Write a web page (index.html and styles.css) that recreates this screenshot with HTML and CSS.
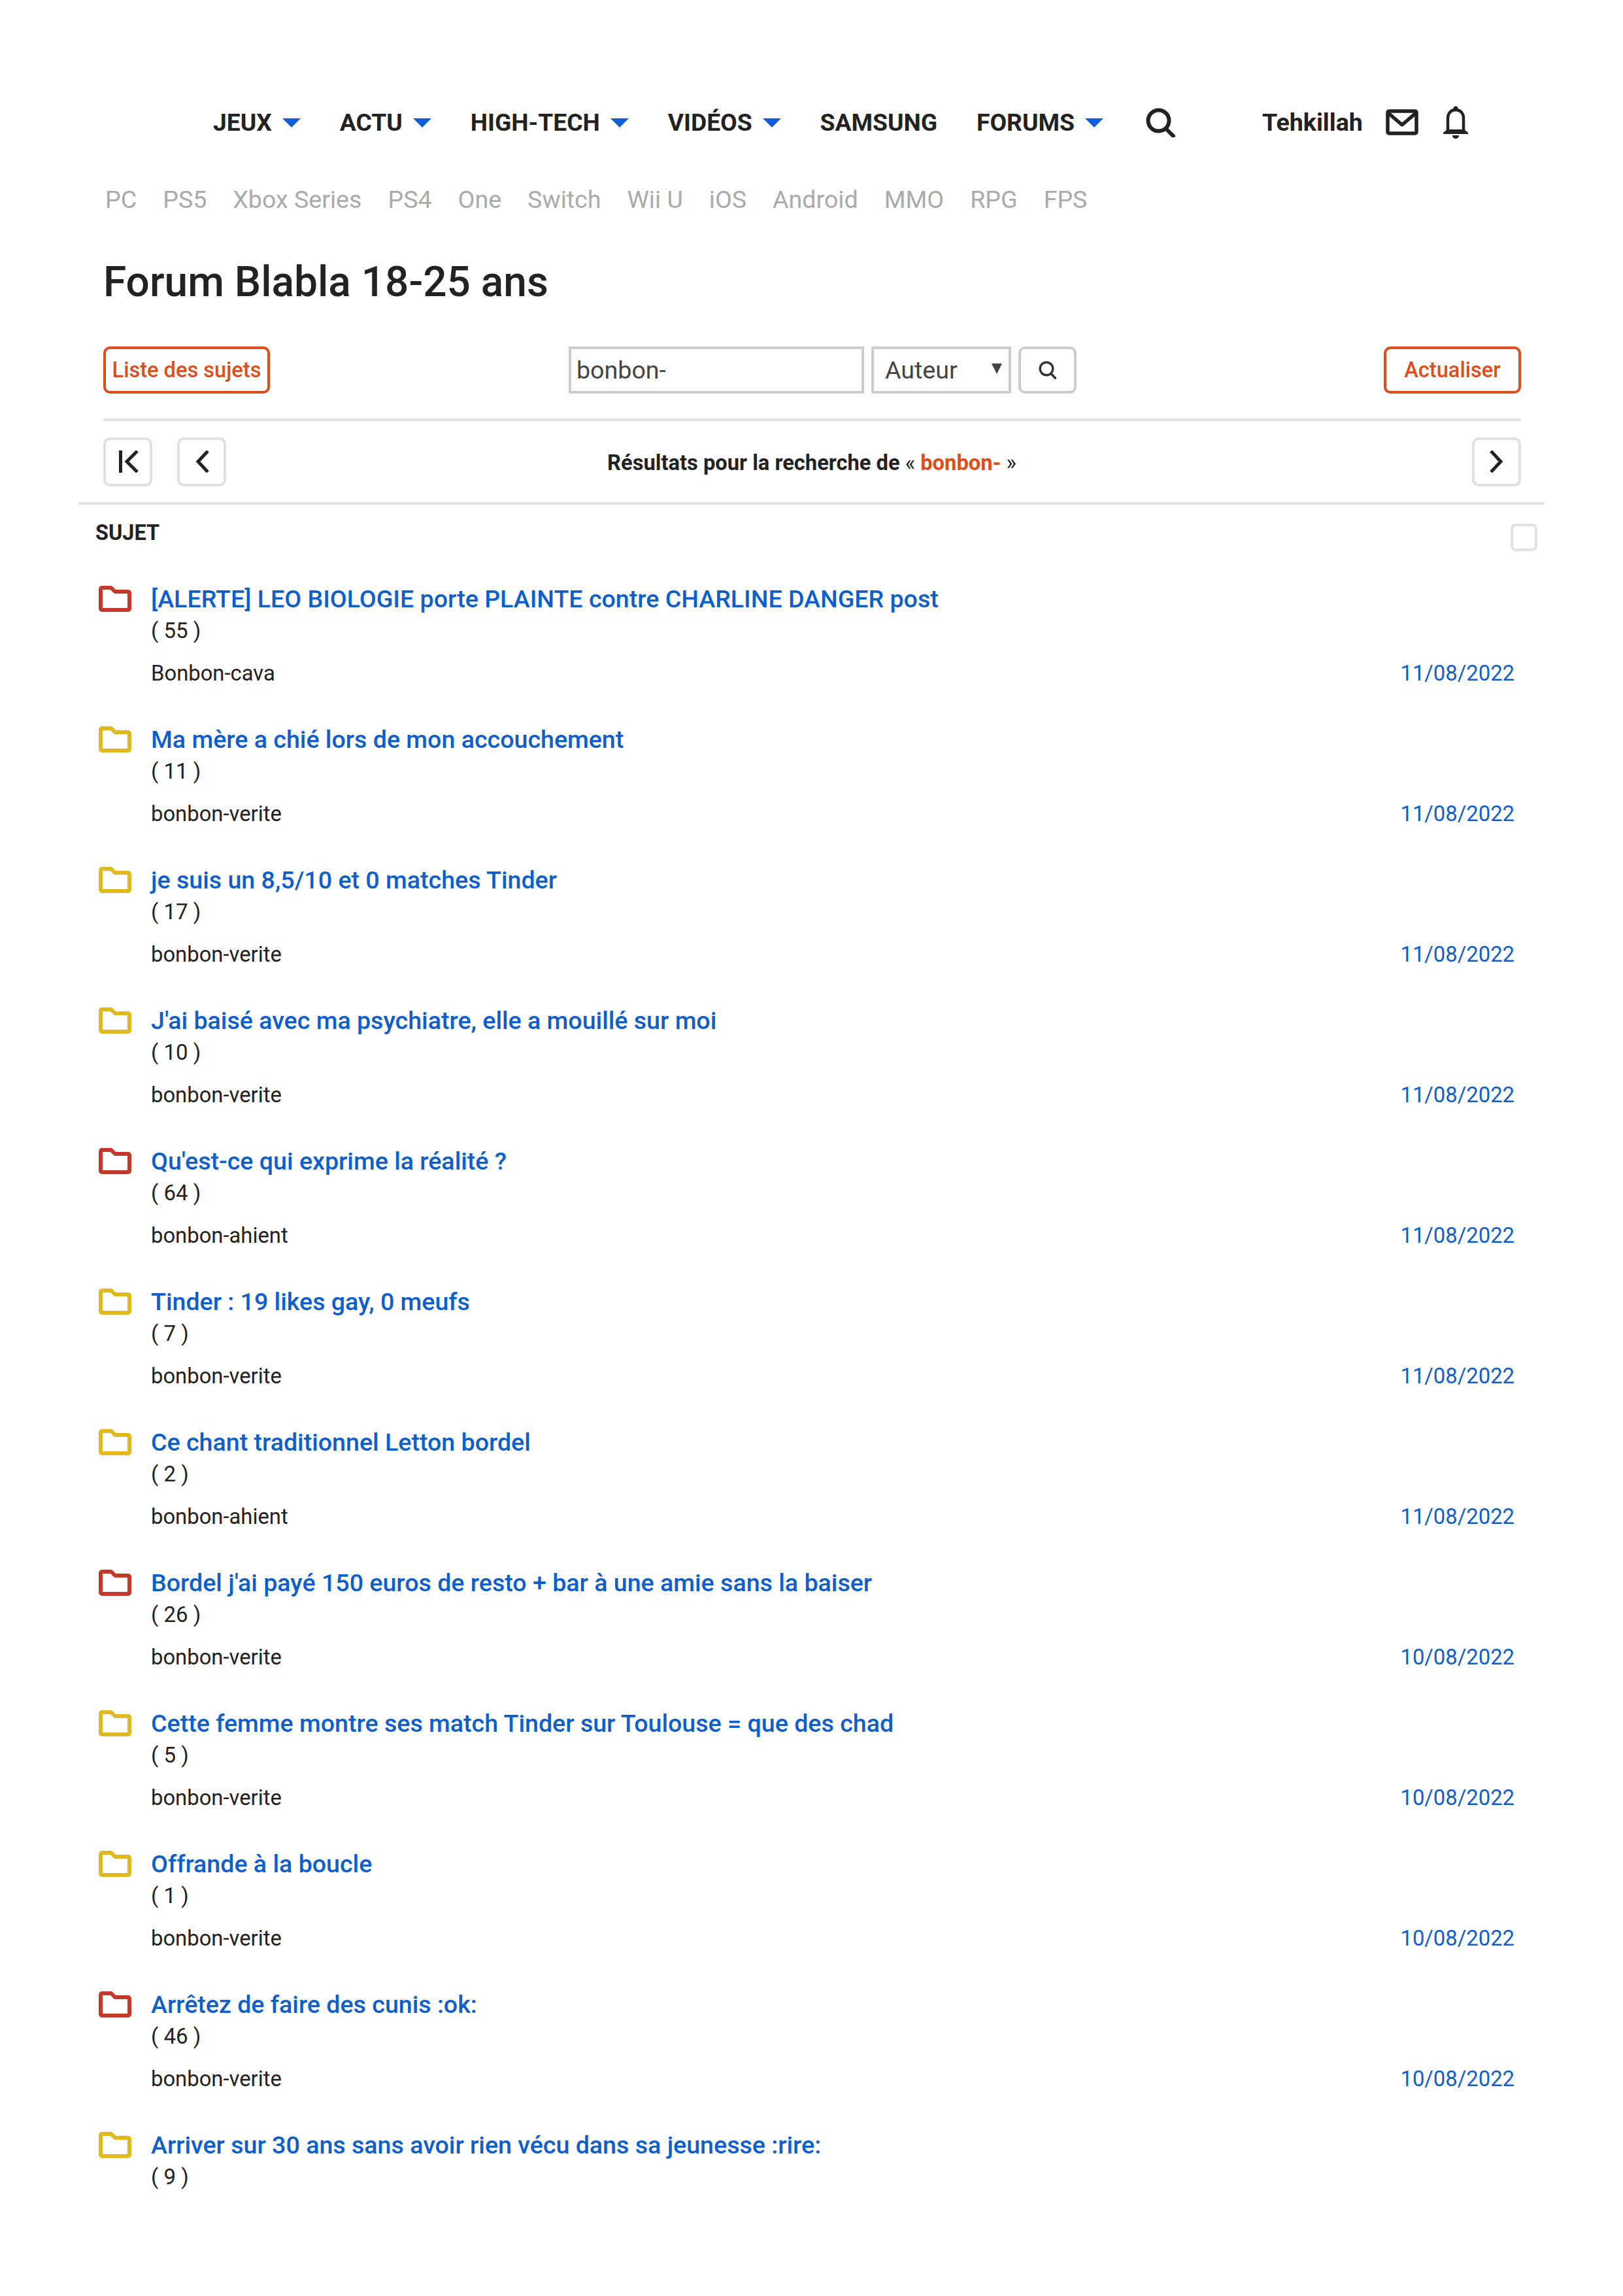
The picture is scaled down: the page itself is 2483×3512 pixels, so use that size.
FILE: index.html
```html
<!DOCTYPE html>
<html lang="fr">
<head>
<meta charset="utf-8">
<title>Forum Blabla 18-25 ans</title>
<link rel="stylesheet" href="styles.css">
</head>
<body>
<header class="topbar">
  <nav class="mainnav">
    <a class="navitem">JEUX<i class="caret"></i></a>
    <a class="navitem">ACTU<i class="caret"></i></a>
    <a class="navitem">HIGH-TECH<i class="caret"></i></a>
    <a class="navitem">VIDÉOS<i class="caret"></i></a>
    <a class="navitem">SAMSUNG</a>
    <a class="navitem">FORUMS<i class="caret"></i></a>
  </nav>
  <svg class="ico-search" viewBox="0 0 45 45" fill="none" stroke="#222" stroke-width="6" stroke-linecap="round"><circle cx="19.5" cy="19.5" r="16"/><path d="M31 32l11 11"/></svg>
  <span class="username">Tehkillah</span>
  <svg class="ico-mail" viewBox="0 0 50 40" fill="none" stroke="#222" stroke-width="5.500" stroke-linejoin="round"><rect x="3" y="3" width="44" height="34" rx="2"/><path d="M4 6l21 18L46 6"/></svg>
  <svg class="ico-bell" viewBox="0 0 40 50" fill="#222"><path fill="none" stroke="#222" stroke-width="4.5" d="M8 38V19C8 11 13 6 20 6s12 5 12 13v19"/><circle cx="20" cy="4" r="3.6"/><path d="M1 41l6-5h26l6 5v2H1z"/><path d="M15 45h10c0 3-2 5-5 5s-5-2-5-5z"/></svg>
</header>
<nav class="subnav">
  <a>PC</a><a>PS5</a><a>Xbox Series</a><a>PS4</a><a>One</a><a>Switch</a><a>Wii U</a><a>iOS</a><a>Android</a><a>MMO</a><a>RPG</a><a>FPS</a>
</nav>
<h1 class="title">Forum Blabla 18-25 ans</h1>
<div class="toolbar">
  <a class="btn btn-list">Liste des sujets</a>
  <form class="searchform">
    <div class="field field-text">bonbon-</div>
    <div class="field field-select">Auteur<i class="selcaret"></i></div>
    <div class="iconbtn searchbtn"><svg viewBox="0 0 28 28" fill="none" stroke="#333" stroke-width="3.4" stroke-linecap="round"><circle cx="12" cy="12" r="9.800"/><path d="M19.500 20l6 6.500"/></svg></div>
  </form>
  <a class="btn btn-refresh">Actualiser</a>
</div>
<div class="pager">
  <a class="iconbtn pagebtn"><svg viewBox="0 0 34 34" fill="none" stroke="#222" stroke-width="5"><path d="M5.500 0v34M31 1L15 17l16 16"/></svg></a>
  <a class="iconbtn pagebtn"><svg viewBox="0 0 34 34" fill="none" stroke="#222" stroke-width="5"><path d="M26 1L11 17l15 16"/></svg></a>
  <p class="results">Résultats pour la recherche de <span class="mark-lt">«</span> <span class="term">bonbon-</span> <span class="mark-lt">»</span></p>
  <a class="iconbtn pagebtn"><svg viewBox="0 0 34 34" fill="none" stroke="#222" stroke-width="5"><path d="M8 1l15 16L8 33"/></svg></a>
</div>
<main class="topics">
  <div class="topics-head"><span class="col-title">SUJET</span><span class="checkbox"></span></div>

  <article class="topic">
    <svg class="folder hot" viewBox="0 0 50 40"><path d="M5 3h14l6 6h20a2 2 0 0 1 2 2v24a2 2 0 0 1-2 2H5a2 2 0 0 1-2-2V5a2 2 0 0 1 2-2z"/></svg>
    <div class="body">
      <a class="subject">[ALERTE] LEO BIOLOGIE porte PLAINTE contre CHARLINE DANGER post</a>
      <div class="count">( 55 )</div>
      <div class="meta"><span>Bonbon-cava</span><a class="date">11/08/2022</a></div>
    </div>
  </article>
  <article class="topic">
    <svg class="folder" viewBox="0 0 50 40"><path d="M5 3h14l6 6h20a2 2 0 0 1 2 2v24a2 2 0 0 1-2 2H5a2 2 0 0 1-2-2V5a2 2 0 0 1 2-2z"/></svg>
    <div class="body">
      <a class="subject">Ma mère a chié lors de mon accouchement</a>
      <div class="count">( 11 )</div>
      <div class="meta"><span>bonbon-verite</span><a class="date">11/08/2022</a></div>
    </div>
  </article>
  <article class="topic">
    <svg class="folder" viewBox="0 0 50 40"><path d="M5 3h14l6 6h20a2 2 0 0 1 2 2v24a2 2 0 0 1-2 2H5a2 2 0 0 1-2-2V5a2 2 0 0 1 2-2z"/></svg>
    <div class="body">
      <a class="subject">je suis un 8,5/10 et 0 matches Tinder</a>
      <div class="count">( 17 )</div>
      <div class="meta"><span>bonbon-verite</span><a class="date">11/08/2022</a></div>
    </div>
  </article>
  <article class="topic">
    <svg class="folder" viewBox="0 0 50 40"><path d="M5 3h14l6 6h20a2 2 0 0 1 2 2v24a2 2 0 0 1-2 2H5a2 2 0 0 1-2-2V5a2 2 0 0 1 2-2z"/></svg>
    <div class="body">
      <a class="subject">J'ai baisé avec ma psychiatre, elle a mouillé sur moi</a>
      <div class="count">( 10 )</div>
      <div class="meta"><span>bonbon-verite</span><a class="date">11/08/2022</a></div>
    </div>
  </article>
  <article class="topic">
    <svg class="folder hot" viewBox="0 0 50 40"><path d="M5 3h14l6 6h20a2 2 0 0 1 2 2v24a2 2 0 0 1-2 2H5a2 2 0 0 1-2-2V5a2 2 0 0 1 2-2z"/></svg>
    <div class="body">
      <a class="subject">Qu'est-ce qui exprime la réalité ?</a>
      <div class="count">( 64 )</div>
      <div class="meta"><span>bonbon-ahient</span><a class="date">11/08/2022</a></div>
    </div>
  </article>
  <article class="topic">
    <svg class="folder" viewBox="0 0 50 40"><path d="M5 3h14l6 6h20a2 2 0 0 1 2 2v24a2 2 0 0 1-2 2H5a2 2 0 0 1-2-2V5a2 2 0 0 1 2-2z"/></svg>
    <div class="body">
      <a class="subject">Tinder : 19 likes gay, 0 meufs</a>
      <div class="count">( 7 )</div>
      <div class="meta"><span>bonbon-verite</span><a class="date">11/08/2022</a></div>
    </div>
  </article>
  <article class="topic">
    <svg class="folder" viewBox="0 0 50 40"><path d="M5 3h14l6 6h20a2 2 0 0 1 2 2v24a2 2 0 0 1-2 2H5a2 2 0 0 1-2-2V5a2 2 0 0 1 2-2z"/></svg>
    <div class="body">
      <a class="subject">Ce chant traditionnel Letton bordel</a>
      <div class="count">( 2 )</div>
      <div class="meta"><span>bonbon-ahient</span><a class="date">11/08/2022</a></div>
    </div>
  </article>
  <article class="topic">
    <svg class="folder hot" viewBox="0 0 50 40"><path d="M5 3h14l6 6h20a2 2 0 0 1 2 2v24a2 2 0 0 1-2 2H5a2 2 0 0 1-2-2V5a2 2 0 0 1 2-2z"/></svg>
    <div class="body">
      <a class="subject">Bordel j'ai payé 150 euros de resto + bar à une amie sans la baiser</a>
      <div class="count">( 26 )</div>
      <div class="meta"><span>bonbon-verite</span><a class="date">10/08/2022</a></div>
    </div>
  </article>
  <article class="topic">
    <svg class="folder" viewBox="0 0 50 40"><path d="M5 3h14l6 6h20a2 2 0 0 1 2 2v24a2 2 0 0 1-2 2H5a2 2 0 0 1-2-2V5a2 2 0 0 1 2-2z"/></svg>
    <div class="body">
      <a class="subject">Cette femme montre ses match Tinder sur Toulouse = que des chad</a>
      <div class="count">( 5 )</div>
      <div class="meta"><span>bonbon-verite</span><a class="date">10/08/2022</a></div>
    </div>
  </article>
  <article class="topic">
    <svg class="folder" viewBox="0 0 50 40"><path d="M5 3h14l6 6h20a2 2 0 0 1 2 2v24a2 2 0 0 1-2 2H5a2 2 0 0 1-2-2V5a2 2 0 0 1 2-2z"/></svg>
    <div class="body">
      <a class="subject">Offrande à la boucle</a>
      <div class="count">( 1 )</div>
      <div class="meta"><span>bonbon-verite</span><a class="date">10/08/2022</a></div>
    </div>
  </article>
  <article class="topic">
    <svg class="folder hot" viewBox="0 0 50 40"><path d="M5 3h14l6 6h20a2 2 0 0 1 2 2v24a2 2 0 0 1-2 2H5a2 2 0 0 1-2-2V5a2 2 0 0 1 2-2z"/></svg>
    <div class="body">
      <a class="subject">Arrêtez de faire des cunis :ok:</a>
      <div class="count">( 46 )</div>
      <div class="meta"><span>bonbon-verite</span><a class="date">10/08/2022</a></div>
    </div>
  </article>
  <article class="topic last">
    <svg class="folder" viewBox="0 0 50 40"><path d="M5 3h14l6 6h20a2 2 0 0 1 2 2v24a2 2 0 0 1-2 2H5a2 2 0 0 1-2-2V5a2 2 0 0 1 2-2z"/></svg>
    <div class="body">
      <a class="subject">Arriver sur 30 ans sans avoir rien vécu dans sa jeunesse :rire:</a>
      <div class="count">( 9 )</div>
    </div>
  </article>
</main>
</body>
</html>
```

FILE: styles.css
```css
* { box-sizing: border-box; }
html, body { margin: 0; padding: 0; background: #fff; }
body { font-family: Roboto, "Liberation Sans", sans-serif; color: #222; height: 3512px; overflow: hidden; }
a { color: inherit; text-decoration: none; }

.topbar { display: flex; align-items: center; height: 50px; margin-top: 162px; padding-left: 326px; }
.mainnav { display: flex; align-items: center; gap: 60px; }
.navitem { display: flex; align-items: center; font-size: 37.2px; font-weight: 700; color: #222; line-height: 50px; }
.caret { width: 0; height: 0; margin-left: 16px; margin-top: 2px; border-left: 14px solid transparent; border-right: 14px solid transparent; border-top: 14px solid #0e5fd8; }
.ico-search { width: 45px; height: 45px; margin-left: 65px; }
.username { font-size: 37.6px; font-weight: 700; margin-left: 133px; }
.ico-mail { width: 50px; height: 40px; margin-left: 35px; }
.ico-bell { width: 40px; height: 50px; margin-left: 37px; }

.subnav { display: flex; gap: 40px; margin-top: 68px; padding-left: 161px; font-size: 37.6px; line-height: 50px; color: #aaa; }

.title { margin: 64px 0 0 158px; font-size: 64px; line-height: 76px; font-weight: 500; color: #222; }

.toolbar { display: flex; align-items: stretch; justify-content: space-between; height: 72px; margin: 60px 156px 0 158px; }
.btn { display: flex; align-items: center; justify-content: center; height: 72px; border: 4px solid #dd4e1b; border-radius: 10px; color: #dd4e1b; font-size: 32.6px; font-weight: 500; }
.btn-list { width: 255px; }
.btn-refresh { width: 210px; }
.searchform { display: flex; gap: 11px; margin-left: 457px; margin-right: auto; }
.field { display: flex; align-items: center; height: 72px; border: 4px solid #ccc; font-size: 37.6px; color: #444; }
.field-text { width: 452px; padding-left: 8px; }
.field-select { width: 214px; padding-left: 17px; position: relative; }
.selcaret { position: absolute; right: 10px; top: 22px; width: 0; height: 0; border-left: 8px solid transparent; border-right: 8px solid transparent; border-top: 16px solid #444; }
.iconbtn { display: flex; align-items: center; justify-content: center; border: 4px solid #e0e0e0; border-radius: 10px; background: #fff; }
.searchbtn { width: 89px; height: 72px; border-color: #ccc; }
.searchbtn svg { width: 28px; height: 28px; }

.pager { display: flex; align-items: center; height: 128px; margin: 38px 156px 0 158px; padding: 24px 0; border-top: 4px solid #e2e2e2; gap: 38px; }
.pagebtn { width: 75px; height: 75px; flex: none; }
.pagebtn svg { width: 34px; height: 34px; }
.results { flex: 1; margin: 0; padding: 3px 114px 0 0; text-align: center; font-size: 32.7px; font-weight: 700; color: #222; }
.mark-lt { font-weight: 400; }
.term { color: #dd4e1b; }

.topics { margin: 0 120px; border-top: 4px solid #e2e2e2; }
.topics-head { display: flex; justify-content: space-between; height: 79px; padding: 24px 11px 0 26px; font-size: 32.4px; font-weight: 700; }
.col-title { line-height: 38px; }
.checkbox { width: 41px; height: 42px; border: 4px solid #e2e2e2; border-radius: 8px; margin-top: 5px; }

.topic { display: flex; height: 215px; padding-left: 31px; }
.folder { width: 50px; height: 40px; flex: none; margin-top: 45px; fill: none; stroke: #e0b91f; stroke-width: 6; stroke-linejoin: round; }
.folder.hot { stroke: #c5392b; }
.body { flex: 1; margin-left: 30px; padding-top: 41px; }
.subject { display: block; font-size: 37.6px; font-weight: 500; line-height: 48px; color: #0e5fcc; }
.count { font-size: 33px; line-height: 50px; color: #222; }
.meta { display: flex; justify-content: space-between; font-size: 32.8px; line-height: 44px; margin-top: 18px; padding-right: 46px; color: #222; }
.date { color: #0e5fcc; }
```
